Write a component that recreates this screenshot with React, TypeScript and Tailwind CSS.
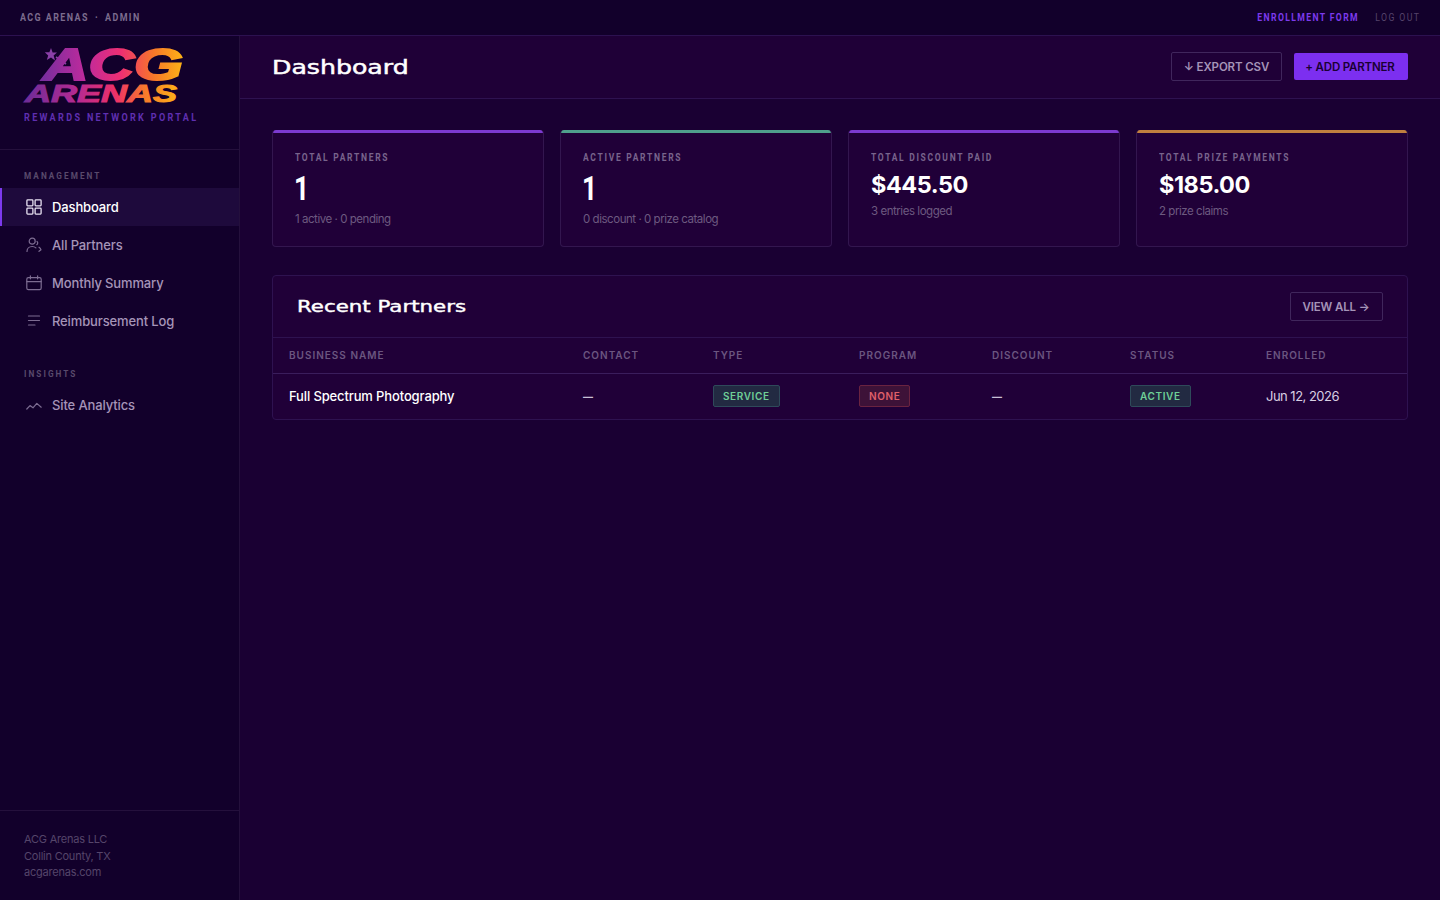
const body = "font-['Inter',sans-serif]"
const label = "font-['Roboto',sans-serif]"
const display = "font-['DejaVu_Sans',sans-serif]"

function GridIcon() {
  return (
    <svg width="16" height="16" viewBox="0 0 16 16" fill="none" stroke="currentColor" strokeWidth="1.3">
      <rect x="0.9" y="0.9" width="6" height="6" rx="0.8" />
      <rect x="9.1" y="0.9" width="6" height="6" rx="0.8" />
      <rect x="0.9" y="9.1" width="6" height="6" rx="0.8" />
      <rect x="9.1" y="9.1" width="6" height="6" rx="0.8" />
    </svg>
  )
}

function PartnersIcon() {
  return (
    <svg width="16" height="16" viewBox="0 0 16 16" fill="none" stroke="currentColor" strokeWidth="1.2" strokeLinecap="round" strokeLinejoin="round">
      <circle cx="6.2" cy="4.2" r="3" />
      <path d="M1 14.5c0-3 2.2-5 5.2-5 1.6 0 2.8.5 3.7 1.4" />
      <path d="M11 4.5c1 .7 1 2.4-.2 3.2" />
      <path d="M13 10.2c1 .6 1.7 1.4 2 2.6l-2 1.5" />
    </svg>
  )
}

function CalendarIcon() {
  return (
    <svg width="16" height="16" viewBox="0 0 16 16" fill="none" stroke="currentColor" strokeWidth="1.2" strokeLinecap="round">
      <rect x="0.8" y="2.6" width="14.4" height="12" rx="1.6" />
      <path d="M.8 6.6h14.4" />
      <path d="M4.4 .8v3" />
      <path d="M11.6 .8v3" />
    </svg>
  )
}

function LinesIcon() {
  return (
    <svg width="16" height="16" viewBox="0 0 16 16" fill="none" stroke="currentColor" strokeWidth="1.2" strokeLinecap="round">
      <path d="M2.5 3h11" />
      <path d="M2.5 7.5h11" />
      <path d="M2.5 12h6.5" />
    </svg>
  )
}

function WaveIcon() {
  return (
    <svg width="16" height="16" viewBox="0 0 16 16" fill="none" stroke="currentColor" strokeWidth="1.2" strokeLinecap="round" strokeLinejoin="round">
      <path d="M.8 12 4 8.6l3 2.2 3.8-4.4 4.4 3.8" />
    </svg>
  )
}

function Logo() {
  return (
    <svg width="162" height="58" viewBox="0 0 162 58" className="block overflow-visible">
      <defs>
        <linearGradient id="acg" gradientUnits="userSpaceOnUse" x1="20" y1="0" x2="160" y2="0">
          <stop offset="0" stopColor="#7a2e9e" />
          <stop offset="0.3" stopColor="#c02a9c" />
          <stop offset="0.55" stopColor="#ee2f72" />
          <stop offset="0.78" stopColor="#f7762a" />
          <stop offset="1" stopColor="#fdb515" />
        </linearGradient>
        <linearGradient id="arenas" gradientUnits="userSpaceOnUse" x1="1" y1="0" x2="153" y2="0">
          <stop offset="0" stopColor="#6e2c98" />
          <stop offset="0.35" stopColor="#b72a92" />
          <stop offset="0.6" stopColor="#ee3168" />
          <stop offset="0.8" stopColor="#f77d29" />
          <stop offset="1" stopColor="#fdb018" />
        </linearGradient>
      </defs>
      <polygon points="27,2 28.6,6.4 33,6.6 29.6,9.6 31,14.4 27,11.6 22.8,14 24.2,9.4 20.8,6.2 25.4,6.2" fill="#8a3fa8" />
      <path d="M32 11l10 7" stroke="#8a3fa8" strokeWidth="1.6" />
      <text x="19" y="34" fontFamily="Liberation Sans, sans-serif" fontWeight="700" fontStyle="italic" fontSize="44" textLength="140" lengthAdjust="spacingAndGlyphs" fill="url(#acg)" stroke="url(#acg)" strokeWidth="2">ACG</text>
      <text x="1" y="56" fontFamily="Liberation Sans, sans-serif" fontWeight="700" fontStyle="italic" fontSize="24" textLength="152" lengthAdjust="spacingAndGlyphs" fill="url(#arenas)" stroke="url(#arenas)" strokeWidth="1">ARENAS</text>
    </svg>
  )
}

function NavItem({ icon, text, active }: { icon: React.ReactNode; text: string; active?: boolean }) {
  return (
    <a className={active
      ? "flex items-center gap-[10px] h-[38px] pl-[24px] border-l-2 border-[#7c3aed] bg-[#1e0a3c] text-white text-[13px] font-medium tracking-[-0.01em]"
      : "flex items-center gap-[10px] h-[38px] pl-[26px] text-[#a594b8] text-[13px] font-medium tracking-[-0.01em]"}>
      <span className={active ? "text-[#e9e2f2]" : "text-[#7d6c92]"}>{icon}</span>
      <span className="pt-[2px]">{text}</span>
    </a>
  )
}

function NavLabel({ text, className }: { text: string; className: string }) {
  return (
    <div className={`pl-[24px] ${className}`}>
      <div className={`${label} origin-left scale-x-[0.865] text-[9.5px] leading-[10px] font-bold tracking-[0.25em] text-[#594a6c]`}>{text}</div>
    </div>
  )
}

function StatCard({ title, value, sub, color, big }: { title: string; value: string; sub: string; color: string; big?: boolean }) {
  return (
    <div className="h-[117px] rounded-[4px] border border-[#33164f] border-t-0 bg-[#200038] overflow-hidden">
      <div className={`h-[3px] ${color}`} />
      <div className="pl-[22px] pt-[20px]">
        <div className={`${label} origin-left scale-x-[0.85] text-[10px] leading-[10px] font-bold tracking-[0.2em] text-[#78648c]`}>{title}</div>
        {big ? (
          <div className={`${label} origin-left scale-x-[0.8] -ml-[1px] mt-[7px] text-[33px] leading-[38px] font-bold text-white`}>{value}</div>
        ) : (
          <div className={`${body} mt-[7px] text-[23.5px] leading-[30px] font-bold tracking-[-0.02em] text-white`}>{value}</div>
        )}
        <div className={`${body} ${big ? 'mt-[3px]' : 'mt-[3px]'} text-[11.5px] leading-[16px] tracking-[-0.04em] text-[#6d5a80]`}>{sub}</div>
      </div>
    </div>
  )
}

function Badge({ text, tone }: { text: string; tone: 'green' | 'red' }) {
  return (
    <span className={tone === 'green'
      ? `${body} inline-block h-[22px] leading-[20px] px-[9px] rounded-[2px] border border-[#2e4a5a] bg-[#222a42] text-[10px] font-semibold tracking-[0.06em] text-[#6fcf97]`
      : `${body} inline-block h-[22px] leading-[20px] px-[9px] rounded-[2px] border border-[#6a2340] bg-[#3d1238] text-[10px] font-semibold tracking-[0.06em] text-[#e0606a]`}>
      {text}
    </span>
  )
}

const thClass = `${body} px-[16px] text-left text-[10px] font-semibold tracking-[0.1em] text-[#6b5680]`

export default function App() {
  return (
    <div className={`${body} h-[900px] flex flex-col bg-[#1a0033] overflow-hidden`}>
      {/* top bar */}
      <div className="h-[36px] shrink-0 flex items-center justify-between px-[20px] bg-[#12002b] border-b border-[#2c1150]">
        <div className={`${label} origin-left scale-x-[0.85] text-[10.5px] font-bold tracking-[0.16em] text-[#7c6c8e]`}>
          ACG ARENAS<span className="mx-[7px]">·</span>ADMIN
        </div>
        <div className={`${label} flex gap-[7px] text-[10.5px] tracking-[0.16em]`}>
          <span className="origin-right scale-x-[0.82] font-bold text-[#7c3aed]">ENROLLMENT FORM</span>
          <span className="origin-right scale-x-[0.83] text-[#55436a]">LOG OUT</span>
        </div>
      </div>

      <div className="flex-1 flex min-h-0">
        {/* sidebar */}
        <aside className="w-[240px] shrink-0 flex flex-col bg-[#12002b] border-r border-[#24103c]">
          <div className="h-[114px] shrink-0 border-b border-[#24103c] pl-[24px] pt-[10px]">
            <Logo />
            <div className={`${label} origin-left scale-x-[0.86] mt-[8px] text-[10.5px] leading-[12px] font-bold tracking-[0.26em] text-[#5f2fb0]`}>REWARDS NETWORK PORTAL</div>
          </div>
          <div className="flex-1">
            <NavLabel text="MANAGEMENT" className="pt-[21px] pb-[7px]" />
            <NavItem active text="Dashboard" icon={<GridIcon />} />
            <NavItem text="All Partners" icon={<PartnersIcon />} />
            <NavItem text="Monthly Summary" icon={<CalendarIcon />} />
            <NavItem text="Reimbursement Log" icon={<LinesIcon />} />
            <NavLabel text="INSIGHTS" className="pt-[29px] pb-[7px]" />
            <NavItem text="Site Analytics" icon={<WaveIcon />} />
          </div>
          <div className="h-[90px] shrink-0 border-t border-[#24103c] pl-[24px] pt-[20px] text-[11px] leading-[16.5px] tracking-[-0.02em] text-[#55456a]">
            <div>ACG Arenas LLC</div>
            <div>Collin County, TX</div>
            <div>acgarenas.com</div>
          </div>
        </aside>

        {/* main */}
        <main className="flex-1 min-w-0">
          <header className="h-[63px] pb-[1px] flex items-center justify-between px-[32px] bg-[#1f0037] border-b border-[#2e1250]">
            <h1 className={`${display} origin-left scale-x-[1.26] pt-[1px] text-[20px] font-normal [-webkit-text-stroke:0.5px_white] text-white`}>Dashboard</h1>
            <div className="flex items-center gap-[12px]">
              <button className="h-[29px] w-[111px] pt-[2px] rounded-[2px] border border-[#40265c] text-[11.5px] font-semibold tracking-[-0.01em] text-[#a594b8]">↓ EXPORT CSV</button>
              <button className="h-[27px] w-[114px] pt-[2px] pr-[2px] rounded-[2px] bg-[#7c2ff0] text-[11.5px] font-semibold tracking-[-0.015em] text-[#1a0033]">+ ADD PARTNER</button>
            </div>
          </header>

          <div className="px-[32px] pt-[31px]">
            <div className="grid grid-cols-4 gap-[16px]">
              <StatCard big title="TOTAL PARTNERS" value="1" sub="1 active · 0 pending" color="bg-[#7c3ad0]" />
              <StatCard big title="ACTIVE PARTNERS" value="1" sub="0 discount · 0 prize catalog" color="bg-[#4f9f8c]" />
              <StatCard title="TOTAL DISCOUNT PAID" value="$445.50" sub="3 entries logged" color="bg-[#7c3ad0]" />
              <StatCard title="TOTAL PRIZE PAYMENTS" value="$185.00" sub="2 prize claims" color="bg-[#c0803f]" />
            </div>

            <section className="mt-[28px] rounded-[4px] border border-[#2e1250] bg-[#200038] overflow-hidden">
              <div className="h-[62px] flex items-center justify-between pl-[24px] pr-[24px] border-b border-[#2e1250]">
                <h2 className={`${display} origin-left scale-x-[1.375] pt-[3px] text-[15.5px] font-normal [-webkit-text-stroke:0.4px_white] text-white`}>Recent Partners</h2>
                <button className="h-[29px] w-[93px] pt-[2px] pr-[1px] rounded-[2px] border border-[#40265c] text-[11.5px] font-semibold tracking-[-0.01em] text-[#a594b8]">VIEW ALL →</button>
              </div>
              <table className="w-full table-fixed border-collapse">
                <colgroup>
                  <col className="w-[294px]" />
                  <col className="w-[130px]" />
                  <col className="w-[146px]" />
                  <col className="w-[133px]" />
                  <col className="w-[138px]" />
                  <col className="w-[136px]" />
                  <col />
                </colgroup>
                <thead>
                  <tr className="h-[35px] border-b border-[#3a1d5c]">
                    <th className={thClass}>BUSINESS NAME</th>
                    <th className={thClass}>CONTACT</th>
                    <th className={thClass}>TYPE</th>
                    <th className={thClass}>PROGRAM</th>
                    <th className={thClass}>DISCOUNT</th>
                    <th className={thClass}>STATUS</th>
                    <th className={thClass}>ENROLLED</th>
                  </tr>
                </thead>
                <tbody>
                  <tr className="h-[46px] text-[13px] tracking-[-0.01em]">
                    <td className="px-[16px] font-medium text-white">Full Spectrum Photography</td>
                    <td className="px-[16px] text-[10px] font-bold text-[#c9bfd6]">—</td>
                    <td className="px-[16px]"><Badge text="SERVICE" tone="green" /></td>
                    <td className="px-[16px]"><Badge text="NONE" tone="red" /></td>
                    <td className="px-[16px] text-[10px] font-bold text-[#c9bfd6]">—</td>
                    <td className="px-[16px]"><Badge text="ACTIVE" tone="green" /></td>
                    <td className="px-[16px] tracking-[-0.04em] text-[#d8cfe2]">Jun 12, 2026</td>
                  </tr>
                </tbody>
              </table>
            </section>
          </div>
        </main>
      </div>
    </div>
  )
}
